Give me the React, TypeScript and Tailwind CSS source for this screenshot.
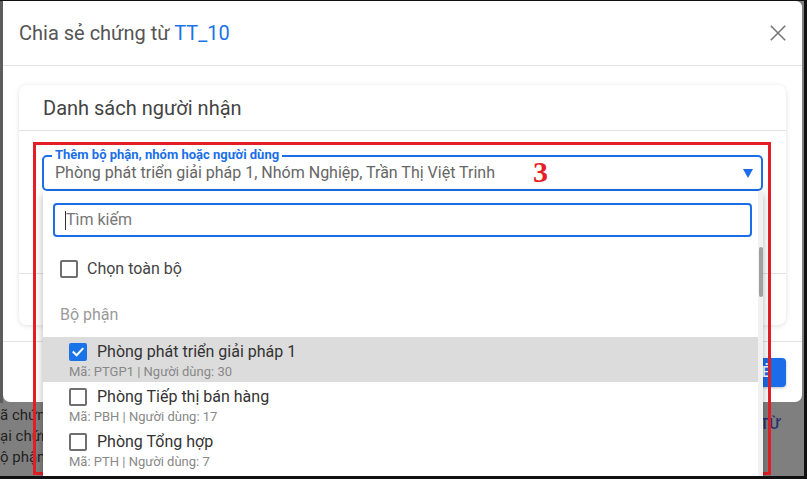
import React from 'react';

const Checkbox: React.FC<{ checked?: boolean }> = ({ checked }) =>
  checked ? (
    <span className="w-[18px] h-[18px] rounded-[2px] bg-[#1a73e8] flex items-center justify-center shrink-0">
      <svg width="14" height="14" viewBox="0 0 14 14" fill="none">
        <path d="M2.5 7.2 L5.6 10.2 L11.6 3.8" stroke="#fff" strokeWidth="2" strokeLinecap="square" />
      </svg>
    </span>
  ) : (
    <span className="w-[18px] h-[18px] rounded-[2px] border-2 border-[#6f6f6f] bg-white shrink-0" />
  );

const departments = [
  { name: 'Phòng phát triển giải pháp 1', code: 'PTGP1', users: 30, checked: true },
  { name: 'Phòng Tiếp thị bán hàng', code: 'PBH', users: 17, checked: false },
  { name: 'Phòng Tổng hợp', code: 'PTH', users: 7, checked: false },
];

export default function App() {
  return (
    <div className="relative w-[807px] h-[479px] bg-[#111] overflow-hidden" style={{ fontFamily: 'Roboto, "Noto Sans", sans-serif' }}>
      {/* dimmed page behind the modal */}
      <div className="absolute left-0 top-[1px] w-[804px] h-[475px] bg-[#7f7f7f]">
        <div className="absolute left-0 top-0 w-[3px] h-[402px] bg-[#5c5c5c]" />
        <div className="absolute left-0 top-[404px] flex flex-col text-[15px] leading-[21px] text-[#1f1f1f]">
          <span>ã chứng</span>
          <span>ại chứng</span>
          <span>ộ phận:</span>
        </div>
        <span className="absolute left-[760px] top-[412px] text-[15px] font-medium text-[#263170]">TỪ</span>
      </div>

      {/* modal */}
      <div className="absolute left-[3px] top-[1px] w-[799px] bg-white rounded-b-[7px] rounded-tr-[6px]">
        <div className="h-[64px] px-[16px] flex items-center justify-between border-b border-[#e2e2e2] box-content">
          <h2 className="text-[20px] text-[#555]">
            Chia sẻ chứng từ <span className="text-[#1a73e8]">TT_10</span>
          </h2>
          <svg width="16" height="16" viewBox="0 0 16 16" fill="none">
            <path d="M0.8 0.8 L15.2 15.2 M15.2 0.8 L0.8 15.2" stroke="#777" strokeWidth="1.6" />
          </svg>
        </div>

        <div className="pt-[19px] px-[16px] pb-[16px]">
          <div className="rounded-[8px] bg-white shadow-[0_1px_5px_rgba(0,0,0,0.13)]">
            <div className="h-[45px] pl-[24px] flex items-center border-b border-[#e2e2e2] box-content">
              <span className="text-[20px] text-[#444]">Danh sách người nhận</span>
            </div>
            <div className="px-[23px] pt-[24px] pb-[82px]">
              <div className="relative h-[36px] border-2 border-[#1a6fe8] rounded-[5px] flex items-center pl-[11px] pr-[8px]">
                <span className="absolute left-[8px] -top-[9px] px-[3px] bg-white text-[13px] leading-[14px] font-bold text-[#1a6fe8]">
                  Thêm bộ phận, nhóm hoặc người dùng
                </span>
                <span className="flex-1 text-[16px] text-[#666] whitespace-nowrap">
                  Phòng phát triển giải pháp 1, Nhóm Nghiệp, Trần Thị Việt Trinh
                </span>
                <svg width="10" height="9" viewBox="0 0 10 9">
                  <path d="M0 0 H10 L5 9 Z" fill="#1a6fe8" />
                </svg>

                {/* dropdown */}
                <div className="absolute left-[-1px] right-[-2px] top-[34px] h-[300px] bg-white shadow-[0_3px_8px_rgba(0,0,0,0.3)] flex z-10">
                  <div className="flex-1 flex flex-col">
                    <div className="pt-[12px] pl-[10px] pr-[6px]">
                      <div className="h-[34px] border-2 border-[#1a6fe8] rounded-[4px] flex items-center pl-[10px]">
                        <span className="w-[1px] h-[19px] bg-[#333]" />
                        <span className="text-[16px] text-[#777]">Tìm kiếm</span>
                      </div>
                    </div>
                    <div className="mt-[12px] h-[40px] pl-[17px] flex items-center gap-[9px]">
                      <Checkbox />
                      <span className="text-[16px] text-[#444]">Chọn toàn bộ</span>
                    </div>
                    <div className="pl-[17px] pt-[16px] pb-[12px] text-[16px] leading-[20px] text-[#9a9a9a]">Bộ phận</div>
                    {departments.map((d) => (
                      <div key={d.code} className={`pl-[26px] pt-[5px] ${d.checked ? 'bg-[#dcdcdc]' : ''}`}>
                        <div className="h-[20px] flex items-center gap-[10px]">
                          <Checkbox checked={d.checked} />
                          <span className="text-[16px] text-[#333]">{d.name}</span>
                        </div>
                        <div className="h-[20px] flex items-center text-[13px] text-[#888]">
                          Mã: {d.code} | Người dùng: {d.users}
                        </div>
                      </div>
                    ))}
                  </div>
                  <div className="w-[5px] bg-[#f1f1f1]">
                    <div className="mt-[56px] h-[50px] w-[4px] ml-[1px] rounded-[2px] bg-[#a1a1a1]" />
                  </div>
                </div>
              </div>
            </div>
            <div className="h-[51px] border-t border-[#e2e2e2] box-content" />
          </div>
        </div>

        <div className="h-[60px] border-t border-[#e2e2e2] box-content flex items-center justify-end px-[16px]">
          <button className="h-[29px] px-[16px] rounded-[4px] bg-[#1a6ce8] text-white text-[14px] font-medium shadow-[0_1px_3px_rgba(0,0,0,0.25)]">
            CHIA SẺ
          </button>
        </div>
      </div>

      {/* annotation */}
      <div className="absolute left-[33px] top-[142px] w-[738px] h-[333px] border-[3px] border-[#e41e26]" />
      <span className="absolute left-[533px] top-[157px] text-[30px] leading-[30px] font-bold text-[#e41e26]" style={{ fontFamily: '"Liberation Serif", serif' }}>
        3
      </span>

      {/* screenshot frame */}
      <div className="absolute left-0 bottom-0 w-full h-[3px] bg-[#111] z-20" />
      <div className="absolute right-0 top-0 w-[3px] h-full bg-[#111] z-20" />
    </div>
  );
}
